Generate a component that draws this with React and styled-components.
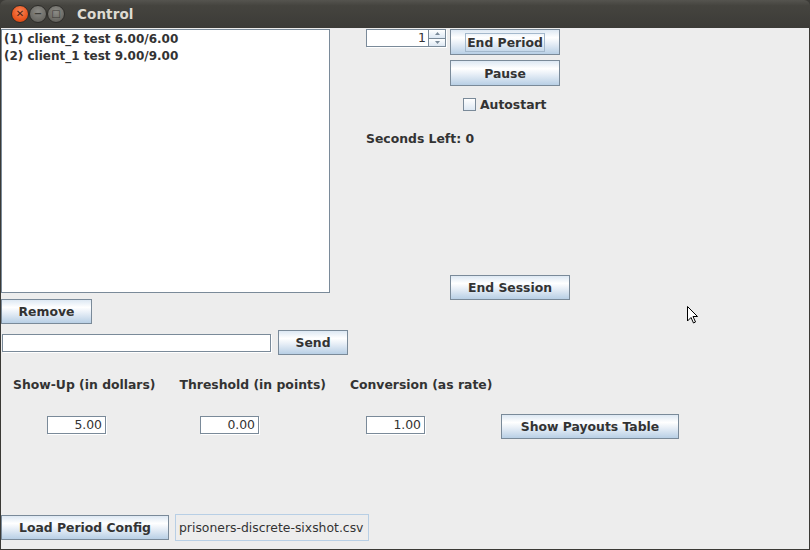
import React from 'react';
import styled, { createGlobalStyle } from 'styled-components';

const GlobalStyle = createGlobalStyle`
    html, body {
        margin: 0;
        padding: 0;
        background: #3c3b37;
    }
    * {
        box-sizing: border-box;
    }
`;

const Window = styled.div`
    position: relative;
    width: 810px;
    height: 550px;
    display: flex;
    flex-direction: column;
    background: #3a3935;
    border-radius: 6px 6px 0 0;
    overflow: hidden;
    font-family: "DejaVu Sans", sans-serif;
    color: #333333;
`;

const TitleBar = styled.div`
    height: 28px;
    flex: none;
    display: flex;
    align-items: center;
    padding-left: 11px;
    background: linear-gradient(#55544f 0%, #45443f 20%, #3c3b37 100%);
`;

const WinButton = styled.div`
    width: 18px;
    height: 18px;
    margin-right: 0;
    border-radius: 50%;
    display: flex;
    align-items: center;
    justify-content: center;
    font-size: 10px;
    font-weight: bold;
    line-height: 1;
    border: 1px solid #2e2d2a;
    color: ${p => (p.$close ? '#4a2010' : '#3c3b37')};
    background: ${p => (p.$close
        ? 'radial-gradient(circle at 50% 35%, #f8875b 0%, #e9561f 60%, #c5400f 100%)'
        : 'radial-gradient(circle at 50% 35%, #8c8b86 0%, #6e6d68 60%, #55544f 100%)')};
`;

const Title = styled.div`
    margin-left: 12px;
    font-size: 13.5px;
    font-weight: bold;
    color: #dfdbd2;
    letter-spacing: 0.1px;
`;

const Body = styled.div`
    flex: 1;
    margin: 0 1px 1px 1px;
    background: #ededed;
    display: flex;
    flex-direction: column;
    padding-top: 1px;
`;

const TopSection = styled.div`
    display: flex;
    align-items: flex-start;
`;

const LeftCol = styled.div`
    width: 329px;
    display: flex;
    flex-direction: column;
    align-items: flex-start;
`;

const RightCol = styled.div`
    margin-left: 36px;
    display: flex;
    flex-direction: column;
    align-items: flex-start;
`;

const List = styled.div`
    width: 329px;
    height: 264px;
    background: #ffffff;
    border: 1px solid #7a8a99;
    padding: 1px 2px;
`;

const ListItem = styled.div`
    font-size: 12px;
    font-weight: bold;
    line-height: 17px;
    color: #333333;
    white-space: nowrap;
`;

const Button = styled.button`
    width: ${p => p.$w}px;
    height: ${p => p.$h || 26}px;
    margin: ${p => p.$m || '0'};
    padding: 0;
    flex: none;
    display: flex;
    align-items: center;
    justify-content: center;
    border: 1px solid #7a8a99;
    border-radius: 0;
    background: linear-gradient(#dde8f3 0%, #ffffff 32%, #e8eff7 55%, #b8cfe5 100%);
    font-family: "DejaVu Sans", sans-serif;
    font-size: 12.4px;
    font-weight: bold;
    color: #333333;
    cursor: pointer;
    white-space: nowrap;
`;

const FocusRing = styled.span`
    border: 1px solid #a3b8cc;
    padding: 2px 1px 1px 1px;
    line-height: 14px;
`;

const TextField = styled.div`
    width: ${p => p.$w}px;
    height: 18px;
    margin: ${p => p.$m || '0'};
    flex: none;
    background: #ffffff;
    border: 1px solid #7a8a99;
    box-shadow: 1px 1px 0 #ffffff;
    font-size: 12.4px;
    line-height: 16px;
    text-align: right;
    padding: 0 3px;
    color: #333333;
`;

const RowTop = styled.div`
    display: flex;
    align-items: flex-start;
`;

const SendRow = styled.div`
    display: flex;
    align-items: center;
    margin-top: 6px;
`;

const Spinner = styled.div`
    width: 80px;
    height: 18px;
    display: flex;
    border: 1px solid #7a8a99;
    box-shadow: 1px 1px 0 #ffffff;
`;

const SpinnerValue = styled.div`
    flex: 1;
    background: #ffffff;
    font-size: 12.4px;
    line-height: 16px;
    text-align: right;
    padding-right: 2px;
    color: #333333;
`;

const SpinnerArrows = styled.div`
    width: 17px;
    display: flex;
    flex-direction: column;
    border-left: 1px solid #7a8a99;
`;

const SpinArrow = styled.div`
    flex: 1;
    display: flex;
    align-items: center;
    justify-content: center;
    background: linear-gradient(#ffffff, #dde8f3);
    border-top: ${p => (p.$down ? '1px solid #7a8a99' : 'none')};
`;

const CheckRow = styled.div`
    display: flex;
    align-items: center;
    height: 20px;
    margin: 8px 0 0 97px;
    font-size: 12.4px;
    font-weight: bold;
`;

const CheckBox = styled.span`
    width: 13px;
    height: 13px;
    margin-right: 4px;
    border: 1px solid #7a8a99;
    background: linear-gradient(#ffffff, #dde8f3);
`;

const Label = styled.div`
    font-size: 12.4px;
    font-weight: bold;
    line-height: 16px;
    margin: ${p => p.$m || '0'};
    white-space: nowrap;
`;

const LabelsRow = styled.div`
    display: flex;
    gap: 24px;
    margin-top: 22px;
    padding-left: 12px;
`;

const FieldsRow = styled.div`
    display: flex;
    align-items: flex-start;
    margin-top: 21px;
`;

const BottomRow = styled.div`
    margin-top: auto;
    margin-bottom: 8px;
    display: flex;
    align-items: center;
`;

const FileLabel = styled.div`
    width: 194px;
    height: 27px;
    margin-left: 6px;
    border: 1px solid #b8cfe5;
    font-size: 12.4px;
    line-height: 25px;
    padding-left: 3px;
    color: #333333;
    white-space: nowrap;
`;

const Pointer = styled.svg`
    position: absolute;
    left: 686px;
    top: 305px;
`;

const Arrow = ({ down }) => (
    <svg width="5" height="3" viewBox="0 0 5 3">
        <path d={down ? 'M0 0 L5 0 L2.5 3 Z' : 'M0 3 L5 3 L2.5 0 Z'} fill="#7a8a99" />
    </svg>
);

export default function App() {
    return (
        <Window>
            <GlobalStyle />
            <TitleBar>
                <WinButton $close>✕</WinButton>
                <WinButton>−</WinButton>
                <WinButton>□</WinButton>
                <Title>Control</Title>
            </TitleBar>
            <Body>
                <TopSection>
                    <LeftCol>
                        <List>
                            <ListItem>(1) client_2 test 6.00/6.00</ListItem>
                            <ListItem>(2) client_1 test 9.00/9.00</ListItem>
                        </List>
                        <Button $w={91} $h={25} $m="6px 0 0 0">Remove</Button>
                        <SendRow>
                            <TextField $w={269} $m="0 0 0 1px" />
                            <Button $w={70} $h={25} $m="0 0 0 7px">Send</Button>
                        </SendRow>
                    </LeftCol>
                    <RightCol>
                        <RowTop>
                            <Spinner>
                                <SpinnerValue>1</SpinnerValue>
                                <SpinnerArrows>
                                    <SpinArrow><Arrow /></SpinArrow>
                                    <SpinArrow $down><Arrow down /></SpinArrow>
                                </SpinnerArrows>
                            </Spinner>
                            <Button $w={110} $m="0 0 0 4px">
                                <FocusRing>End Period</FocusRing>
                            </Button>
                        </RowTop>
                        <Button $w={110} $m="5px 0 0 84px">Pause</Button>
                        <CheckRow>
                            <CheckBox />
                            Autostart
                        </CheckRow>
                        <Label $m="17px 0 0 0">Seconds Left: 0</Label>
                        <Button $w={120} $h={25} $m="128px 0 0 84px">End Session</Button>
                    </RightCol>
                </TopSection>
                <LabelsRow>
                    <Label>Show-Up (in dollars)</Label>
                    <Label>Threshold (in points)</Label>
                    <Label>Conversion (as rate)</Label>
                </LabelsRow>
                <FieldsRow>
                    <TextField $w={59} $m="2px 0 0 46px">5.00</TextField>
                    <TextField $w={59} $m="2px 0 0 94px">0.00</TextField>
                    <TextField $w={59} $m="2px 0 0 107px">1.00</TextField>
                    <Button $w={178} $h={25} $m="0 0 0 76px">Show Payouts Table</Button>
                </FieldsRow>
                <BottomRow>
                    <Button $w={168} $h={25}>Load Period Config</Button>
                    <FileLabel>prisoners-discrete-sixshot.csv</FileLabel>
                </BottomRow>
            </Body>
            <Pointer width="13" height="20" viewBox="0 0 13 20">
                <path d="M1.5 1.5 L1.5 16 L5 12.5 L7.5 18 L9.5 17 L7 11.5 L11.5 11.5 Z" fill="#ffffff" stroke="#000000" strokeWidth="1" strokeLinejoin="round" />
            </Pointer>
        </Window>
    );
}
